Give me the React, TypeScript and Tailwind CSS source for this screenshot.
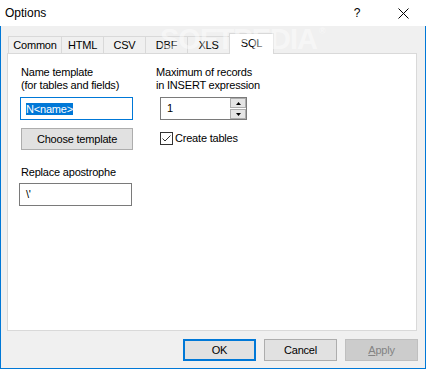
export default function App() {
  const tabs = [
    { label: "Common", w: "w-[54px]" },
    { label: "HTML", w: "w-[43px]" },
    { label: "CSV", w: "w-[43px]" },
    { label: "DBF", w: "w-[43px]" },
    { label: "XLS", w: "w-[43px]" },
  ];
  return (
    <div className="relative w-[426px] h-[369px] flex flex-col bg-white overflow-hidden select-none text-black font-['Liberation_Sans',Arial,sans-serif] text-[11px] tracking-[-0.2px]">
      {/* title bar */}
      <div className="h-[26px] shrink-0 flex items-center">
        <span className="ml-[5px] text-[12px] tracking-normal">Options</span>
        <div className="ml-auto flex h-full">
          <div className="w-[46px] h-full flex items-center justify-center text-[12px] tracking-normal">?</div>
          <div className="w-[46px] h-full flex items-center justify-center">
            <svg width="11" height="11" viewBox="0 0 11 11">
              <path d="M0.5 0.5 L10.5 10.5 M10.5 0.5 L0.5 10.5" stroke="#000" strokeWidth="1" fill="none" />
            </svg>
          </div>
        </div>
      </div>

      {/* client */}
      <div className="flex-1 flex flex-col bg-[#f0f0f0] border-l border-r border-b border-[#0078d7] pt-[7px] pl-[6px] pr-[8px]">
        {/* tabs */}
        <div className="h-[20px] flex items-end ml-[1px]">
          {tabs.map((t, i) => (
            <div
              key={t.label}
              className={`${t.w} ${i > 0 ? "-ml-px" : ""} h-[17px] border-l border-t border-r border-[#d9d9d9] bg-[#f0f0f0] flex items-center justify-center`}
            >
              {t.label}
            </div>
          ))}
          <div className="-ml-px relative z-10 w-[45px] h-[21px] -mb-px border-l border-t border-r border-[#d9d9d9] bg-white flex items-center justify-center pb-[2px]">
            SQL
          </div>
        </div>

        {/* panel */}
        <div className="h-[278px] border border-[#d9d9d9] bg-white flex pl-[11px]">
          {/* left column */}
          <div className="flex flex-col w-[137px] pt-[12px]">
            <div className="ml-[2px] leading-[13px]">
              <div>Name template</div>
              <div>(for tables and fields)</div>
            </div>
            <div className="mt-[5px] ml-[1px] w-[113px] h-[23px] border border-[#0078d7] flex items-center pl-[5px]">
              <span className="bg-[#0078d7] text-white h-[12px] leading-[12px] inline-block">N&lt;name&gt;</span>
            </div>
            <div className="mt-[8px] ml-[2px] w-[112px] h-[22px] border border-[#adadad] bg-[#e1e1e1] flex items-center justify-center">
              Choose template
            </div>
            <div className="mt-[16px] ml-[2px] leading-[13px]">Replace apostrophe</div>
            <div className="mt-[4px] w-[113px] h-[23px] border border-[#7a7a7a] flex items-center pl-[6px]">
              \'
            </div>
          </div>

          {/* right column */}
          <div className="flex flex-col pt-[12px]">
            <div className="leading-[13px]">
              <div>Maximum of records</div>
              <div>in INSERT expression</div>
            </div>
            <div className="mt-[5px] ml-[4px] w-[87px] h-[23px] border border-[#7a7a7a] flex">
              <div className="flex-1 flex items-center pl-[6px]">1</div>
              <div className="w-[16px] flex flex-col gap-px">
                <div className="h-[10px] border border-[#adadad] bg-[#e5e5e5] flex items-center justify-center">
                  <svg width="5" height="3" viewBox="0 0 5 3"><path d="M2.5 0 L5 3 L0 3 Z" fill="#000" /></svg>
                </div>
                <div className="h-[10px] border border-[#adadad] bg-[#e5e5e5] flex items-center justify-center">
                  <svg width="5" height="3" viewBox="0 0 5 3"><path d="M0 0 L5 0 L2.5 3 Z" fill="#000" /></svg>
                </div>
              </div>
            </div>
            <div className="mt-[12px] ml-[4px] flex items-center h-[13px]">
              <div className="w-[13px] h-[13px] border border-[#333333] bg-white flex items-center justify-center">
                <svg width="11" height="11" viewBox="0 0 11 11">
                  <path d="M1.5 5.5 L4 8 L9.5 2.5" stroke="#333" strokeWidth="1" fill="none" />
                </svg>
              </div>
              <span className="ml-[2px]">Create tables</span>
            </div>
          </div>
        </div>

        {/* buttons */}
        <div className="mt-[8px] h-[22px] flex justify-end gap-[8px] -mr-px">
          <div className="w-[73px] h-[22px] border-2 border-[#0078d7] bg-[#e1e1e1] flex items-center justify-center">OK</div>
          <div className="w-[73px] h-[22px] border border-[#adadad] bg-[#e1e1e1] flex items-center justify-center">Cancel</div>
          <div className="w-[73px] h-[22px] border border-[#bfbfbf] bg-[#cccccc] text-[#838383] flex items-center justify-center">
            <span><span className="underline">A</span>pply</span>
          </div>
        </div>
      </div>

      {/* watermark */}
      <div className="absolute left-[160px] top-[25px] z-20 pointer-events-none text-white/45 font-bold text-[29px] leading-[29px] tracking-[-1px] font-['Liberation_Sans',Arial,sans-serif] flex items-start">
        SOFTPEDIA<span className="text-[9px] leading-[9px] mt-[2px] ml-[2px] tracking-normal">®</span>
      </div>
    </div>
  );
}
